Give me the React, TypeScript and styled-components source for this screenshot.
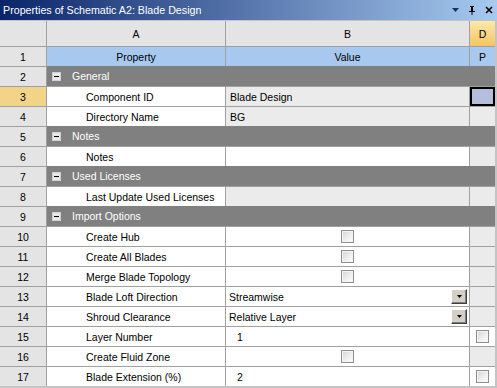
import React from "react";
import styled, { createGlobalStyle, css } from "styled-components";

const GlobalStyle = createGlobalStyle`
  html, body {
    margin: 0;
    padding: 0;
    background: #c4c4c4;
  }
  body {
    font-family: "Liberation Sans", Arial, sans-serif;
    font-size: 10.5px;
    color: #000;
  }
`;

const LINE = "#a0a0a0";
const ROW_NUM_BG = "#e4e4e4";

const Frame = styled.div`
  width: 497px;
  height: 388px;
  background: #c4c4c4;
  display: flex;
  flex-direction: column;
  overflow: hidden;
`;

const TitleBar = styled.div`
  height: 20px;
  flex: none;
  display: flex;
  align-items: center;
  padding-left: 3px;
  padding-right: 4px;
  background: linear-gradient(to right, #0a246a, #a6caf0);
  color: #fff;
  font-size: 10.7px;
  margin-bottom: 1px;
`;

const Title = styled.span`
  flex: 1;
  white-space: nowrap;
`;

const TitleIcons = styled.div`
  display: flex;
  align-items: center;
  gap: 9px;
`;

const Grid = styled.div`
  display: flex;
  flex-direction: column;
  width: 495px;
`;

const Row = styled.div<{ $head?: boolean }>`
  display: grid;
  grid-template-columns: 46px 179px 244px 26px;
  height: ${(p) => (p.$head ? "25px" : "20px")};
`;

const NumCell = styled.div<{ $active?: boolean; $head?: boolean }>`
  box-sizing: border-box;
  display: flex;
  align-items: center;
  justify-content: center;
  background: ${(p) => (p.$active ? "#f1d488" : ROW_NUM_BG)};
  border-top: ${(p) => (p.$head ? "none" : `1px solid ${LINE}`)};
`;

const Cell = styled.div<{
  $bg?: string;
  $head?: boolean;
  $align?: "left" | "center";
  $pad?: number;
  $selected?: boolean;
}>`
  box-sizing: border-box;
  display: flex;
  align-items: center;
  justify-content: ${(p) => (p.$align === "center" ? "center" : "flex-start")};
  padding-left: ${(p) => p.$pad ?? 0}px;
  background: ${(p) => p.$bg ?? "#fff"};
  border-left: 1px solid ${LINE};
  border-top: ${(p) => (p.$head ? "none" : `1px solid ${LINE}`)};
  white-space: nowrap;
  overflow: hidden;
  ${(p) =>
    p.$selected &&
    css`
      box-shadow: inset 0 0 0 2px #000;
    `}
`;

const HeadD = styled(Cell)`
  background: linear-gradient(to bottom, #fde9ab, #f4c463);
`;

const GroupCell = styled.div`
  grid-column: 2 / 5;
  box-sizing: border-box;
  display: flex;
  align-items: center;
  padding-left: 5px;
  gap: 11px;
  background: #808080;
  color: #fff;
  border-left: 1px solid ${LINE};
`;

const Collapse = styled.span`
  box-sizing: border-box;
  width: 9px;
  height: 9px;
  border: 1px solid #d0d0d0;
  background: #e8e8e8;
  display: flex;
  align-items: center;
  justify-content: center;
  &::after {
    content: "";
    width: 5px;
    height: 1px;
    background: #000;
  }
`;

const Check = styled.span`
  box-sizing: border-box;
  width: 13px;
  height: 13px;
  border: 1px solid #8f8f8f;
  background: linear-gradient(135deg, #d4d4d8 0%, #f0f0f2 60%, #ffffff 100%);
  box-shadow: inset 0 0 0 1px #f4f4f4;
`;

const Combo = styled.div`
  flex: 1;
  display: flex;
  align-items: center;
  justify-content: space-between;
  padding-right: 2px;
`;

const DropButton = styled.span`
  box-sizing: border-box;
  width: 16px;
  height: 15px;
  background: #d4d0c8;
  border: 1px solid;
  border-color: #fff #404040 #404040 #fff;
  box-shadow: inset -1px -1px 0 #808080;
  display: flex;
  align-items: center;
  justify-content: center;
`;

type Item =
  | { kind: "group"; label: string }
  | {
      kind: "prop";
      label: string;
      value?: string;
      valuePad?: number;
      check?: boolean;
      combo?: boolean;
      readOnly?: boolean;
      pCheck?: boolean;
      selected?: boolean;
    };

const items: Item[] = [
  { kind: "group", label: "General" },
  { kind: "prop", label: "Component ID", value: "Blade Design", readOnly: true, selected: true },
  { kind: "prop", label: "Directory Name", value: "BG", readOnly: true },
  { kind: "group", label: "Notes" },
  { kind: "prop", label: "Notes" },
  { kind: "group", label: "Used Licenses" },
  { kind: "prop", label: "Last Update Used Licenses", readOnly: true },
  { kind: "group", label: "Import Options" },
  { kind: "prop", label: "Create Hub", check: true },
  { kind: "prop", label: "Create All Blades", check: true },
  { kind: "prop", label: "Merge Blade Topology", check: true },
  { kind: "prop", label: "Blade Loft Direction", value: "Streamwise", combo: true },
  { kind: "prop", label: "Shroud Clearance", value: "Relative Layer", combo: true },
  { kind: "prop", label: "Layer Number", value: "1", valuePad: 11, pCheck: true },
  { kind: "prop", label: "Create Fluid Zone", check: true },
  { kind: "prop", label: "Blade Extension (%)", value: "2", valuePad: 11, pCheck: true },
];

const MenuIcon = () => (
  <svg width="7" height="4" viewBox="0 0 7 4">
    <path d="M0 0h7L3.5 4z" fill="#1a2f6e" />
  </svg>
);

const PinIcon = () => (
  <svg width="8" height="9" viewBox="0 0 8 9">
    <path d="M2 0h4v1H5v4h2v1H4.5v3h-1V6H1V5h2V1H2z" fill="#000" />
    <rect x="3" y="1" width="1" height="4" fill="#000" />
  </svg>
);

const CloseIcon = () => (
  <svg width="8" height="8" viewBox="0 0 8 8">
    <path d="M1 1l6 6M7 1L1 7" stroke="#000" strokeWidth="1.6" />
  </svg>
);

const Arrow = () => (
  <svg width="5" height="3" viewBox="0 0 5 3">
    <path d="M0 0h5L2.5 3z" fill="#000" />
  </svg>
);

const PropertyRow: React.FC<{ n: number; item: Item }> = ({ n, item }) => {
  if (item.kind === "group") {
    return (
      <Row>
        <NumCell>{n}</NumCell>
        <GroupCell>
          <Collapse />
          {item.label}
        </GroupCell>
      </Row>
    );
  }
  return (
    <Row>
      <NumCell $active={item.selected}>{n}</NumCell>
      <Cell $pad={39}>{item.label}</Cell>
      {item.check ? (
        <Cell $align="center">
          <Check />
        </Cell>
      ) : item.combo ? (
        <Cell $pad={3}>
          <Combo>
            {item.value}
            <DropButton>
              <Arrow />
            </DropButton>
          </Combo>
        </Cell>
      ) : (
        <Cell $bg={item.readOnly ? "#ebebeb" : "#fff"} $pad={item.valuePad ?? 4}>
          {item.value}
        </Cell>
      )}
      {item.pCheck ? (
        <Cell $align="center">
          <Check />
        </Cell>
      ) : (
        <Cell $bg={item.selected ? "#b5bfdc" : "#ebebeb"} $selected={item.selected} />
      )}
    </Row>
  );
};

export default function App() {
  return (
    <Frame>
      <GlobalStyle />
      <TitleBar>
        <Title>Properties of Schematic A2: Blade Design</Title>
        <TitleIcons>
          <MenuIcon />
          <PinIcon />
          <CloseIcon />
        </TitleIcons>
      </TitleBar>
      <Grid>
        <Row $head>
          <NumCell $head />
          <Cell $head $align="center" $bg={ROW_NUM_BG}>A</Cell>
          <Cell $head $align="center" $bg={ROW_NUM_BG}>B</Cell>
          <HeadD $head $align="center">D</HeadD>
        </Row>
        <Row>
          <NumCell>1</NumCell>
          <Cell $align="center" $bg="#a7c9ef">Property</Cell>
          <Cell $align="center" $bg="#a7c9ef">Value</Cell>
          <Cell $align="center" $bg="#a7c9ef">P</Cell>
        </Row>
        {items.map((item, i) => (
          <PropertyRow key={i} n={i + 2} item={item} />
        ))}
      </Grid>
    </Frame>
  );
}
